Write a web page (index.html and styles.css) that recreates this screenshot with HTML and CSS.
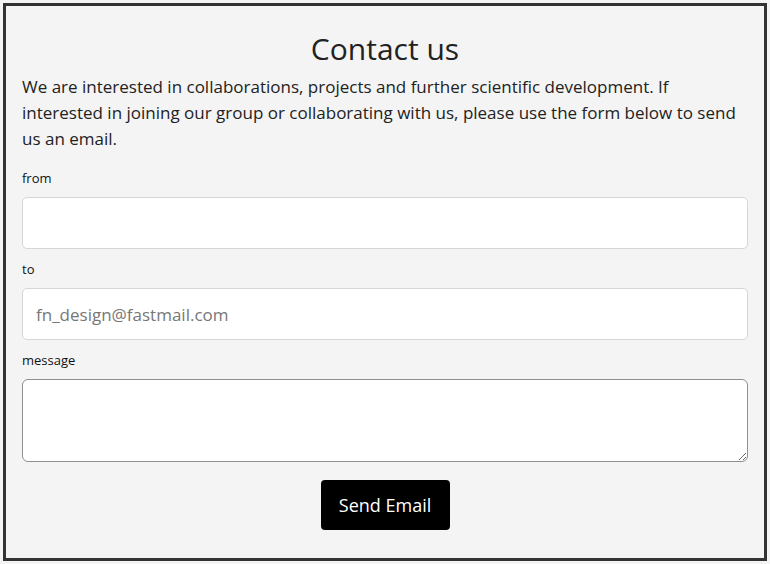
FILE: index.html
```html
<!DOCTYPE html>
<html lang="en">
<head>
<meta charset="utf-8">
<title>Contact us</title>
<link rel="stylesheet" href="styles.css">
</head>
<body>
<section class="contact">
  <h1 class="contact-title">Contact us</h1>
  <p class="contact-intro">We are interested in collaborations, projects and further scientific development. If interested in joining our group or collaborating with us, please use the form below to send us an email.</p>
  <form class="contact-form">
    <label class="field-label" for="from">from</label>
    <input class="field-input" id="from" type="email">
    <label class="field-label" for="to">to</label>
    <input class="field-input" id="to" type="email" placeholder="fn_design@fastmail.com">
    <label class="field-label" for="message">message</label>
    <textarea class="field-textarea" id="message"></textarea>
    <div class="actions">
      <button class="send-btn" type="button">Send Email</button>
    </div>
  </form>
</section>
</body>
</html>
```

FILE: styles.css
```css
html, body {
  margin: 0;
  padding: 0;
  background: #f4f4f4;
}
body {
  padding: 3px;
  font-family: "Open Sans", "Noto Sans", sans-serif;
  color: #222;
}
.contact {
  border: 3px solid #333;
  background: #f4f4f4;
  padding: 22px 16px 27px;
  height: 558px;
  box-sizing: border-box;
}
.contact-title {
  margin: 0;
  font-size: 30px;
  font-weight: 400;
  line-height: 41px;
  text-align: center;
  color: #222;
}
.contact-intro {
  margin: 5px 0 0;
  font-size: 17px;
  line-height: 26px;
  color: #222;
}
.contact-form {
  display: flex;
  flex-direction: column;
  margin-top: 17px;
}
.field-label {
  font-size: 13px;
  line-height: 18px;
  margin-bottom: 10px;
  color: #111;
}
.field-input {
  height: 52px;
  box-sizing: border-box;
  border: 1px solid #d6d6d6;
  border-radius: 5px;
  background: #fff;
  padding: 0 13px;
  font-family: "Open Sans", "Noto Sans", sans-serif;
  font-size: 17px;
  color: #222;
  margin: 0 0 11px;
  outline: none;
}
.field-input::placeholder {
  color: #777;
}
.field-textarea {
  height: 83px;
  box-sizing: border-box;
  border: 1px solid #8f8f8f;
  border-radius: 6px;
  background: #fff;
  padding: 8px 13px;
  font-family: "Open Sans", "Noto Sans", sans-serif;
  font-size: 17px;
  margin: 0;
  resize: vertical;
}
.actions {
  display: flex;
  justify-content: center;
  margin-top: 18px;
}
.send-btn {
  height: 50px;
  width: 129px;
  background: #000;
  color: #fff;
  border: none;
  border-radius: 4px;
  font-family: "Open Sans", "Noto Sans", sans-serif;
  font-size: 18px;
  cursor: pointer;
}
```
